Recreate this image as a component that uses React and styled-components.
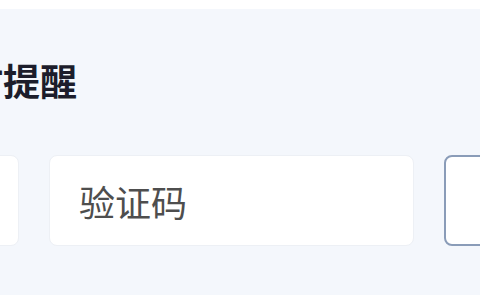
import React from "react";
import styled, { createGlobalStyle } from "styled-components";

const Global = createGlobalStyle`
  html, body { margin: 0; padding: 0; background: #ffffff; }
  body { font-family: "Noto Sans CJK SC", "Noto Sans", sans-serif; overflow: hidden; }
  * { box-sizing: border-box; }
`;

const Page = styled.div`
  width: 480px;
  height: 300px;
  padding-top: 9px;
  overflow: hidden;
`;

const Panel = styled.section`
  height: 286px;
  background: #f4f7fc;
  padding-top: 46px;
  overflow: hidden;
  display: flex;
  flex-direction: column;
`;

const Heading = styled.h2`
  margin: 0 0 50px -71px;
  font-size: 37px;
  line-height: 50px;
  font-weight: 700;
  color: #1c1d2b;
  white-space: nowrap;
`;

const FieldRow = styled.div`
  display: flex;
  gap: 30px;
  margin-left: -346px;
`;

const Field = styled.input`
  flex: 0 0 365px;
  width: 365px;
  height: 91px;
  padding: 0 29px;
  border-radius: 8px;
  border: ${(p) => (p.$active ? "2px solid #8a9cb8" : "1px solid #edf0f5")};
  background: #ffffff;
  font-family: "Noto Sans CJK SC", "Noto Sans", sans-serif;
  font-size: 36px;
  color: #333333;
  outline: none;
  &::placeholder { color: #4e4e4e; }
`;

export default function App() {
  return (
    <>
      <Global />
      <Page>
        <Panel>
          <Heading>定时提醒</Heading>
          <FieldRow>
            <Field type="text" />
            <Field type="text" placeholder="验证码" />
            <Field type="text" $active />
          </FieldRow>
        </Panel>
      </Page>
    </>
  );
}
